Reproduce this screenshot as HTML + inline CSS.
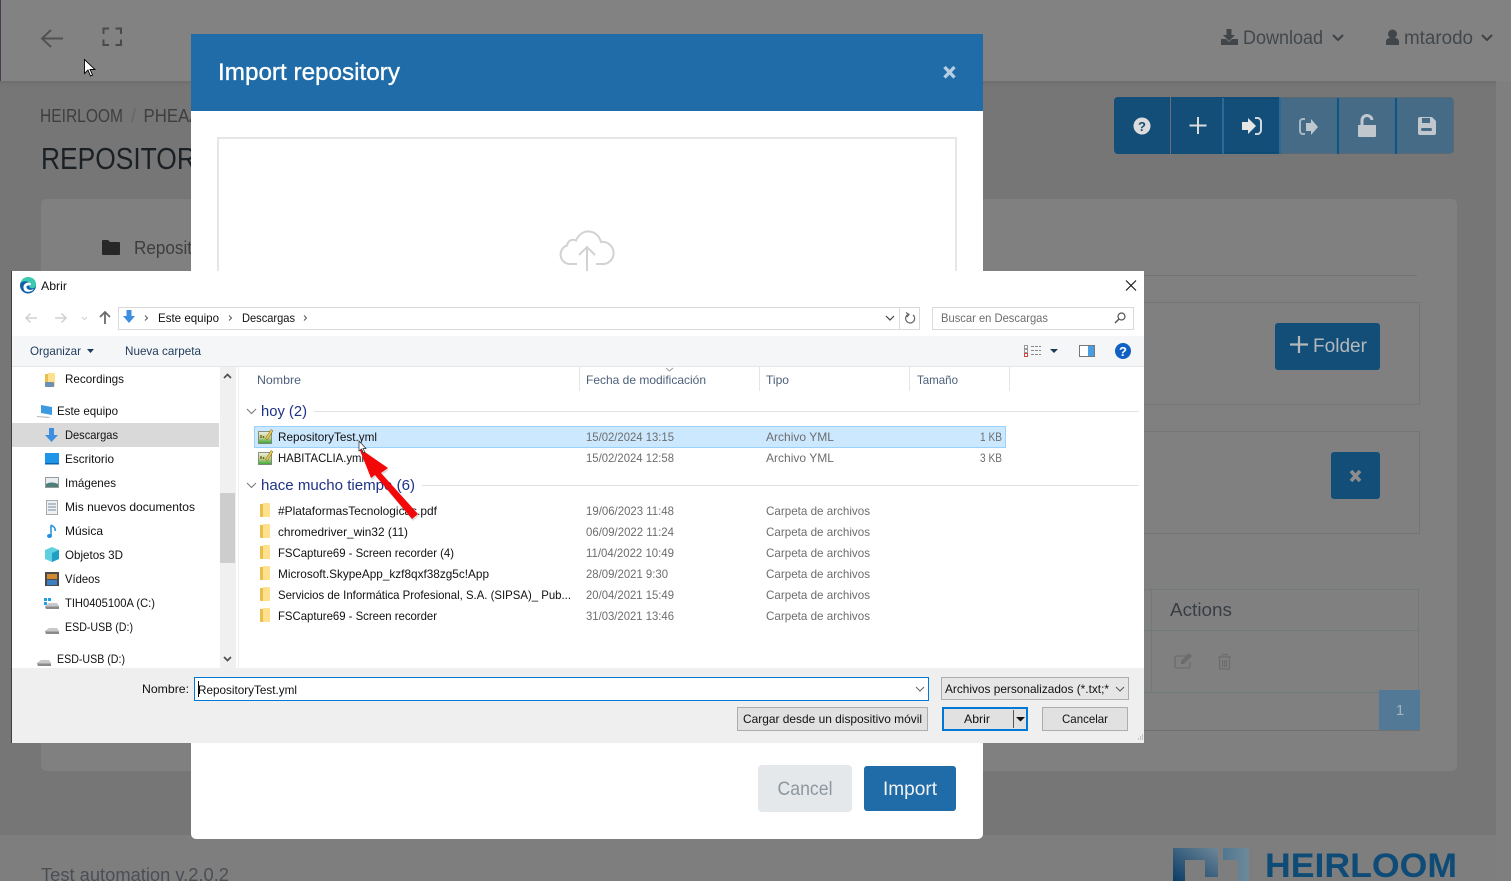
<!DOCTYPE html>
<html lang="es"><head><meta charset="utf-8"><title>Import repository</title>
<style>
html,body{margin:0;padding:0;width:1511px;height:881px;overflow:hidden;background:#767676}
svg{display:block}
text{font-family:"Liberation Sans",sans-serif;white-space:pre}
.w{font-size:12px;fill:#111}
.h{font-size:12px;fill:#4c607a}
.g{font-size:12px;fill:#6d6d6d}
.b{font-size:15px;fill:#1e3287}
</style></head><body>
<svg xmlns="http://www.w3.org/2000/svg" width="1511" height="881" viewBox="0 0 1511 881">
<defs>
<linearGradient id="sh" x1="0" y1="0" x2="0" y2="1"><stop offset="0" stop-color="#6e6e6e"/><stop offset="1" stop-color="#767676"/></linearGradient>
<linearGradient id="lg1" x1="0" y1="1" x2="1" y2="0"><stop offset="0" stop-color="#0b3c66"/><stop offset="1" stop-color="#6d8798"/></linearGradient>
<linearGradient id="lg2" x1="0" y1="0" x2="1" y2="0"><stop offset="0" stop-color="#4f7791"/><stop offset="1" stop-color="#6f8a9a"/></linearGradient>
<linearGradient id="yml" x1="0" y1="0" x2="0" y2="1"><stop offset="0" stop-color="#eef0df"/><stop offset=".55" stop-color="#b9d08c"/><stop offset="1" stop-color="#37a332"/></linearGradient>
<g id="folder"><path d="M0 1h3l1 1v12H1a1 1 0 0 1-1-1z" fill="#e8bf4d"/><path d="M3 0h6a1 1 0 0 1 1 1v13H3z" fill="#ffe08c"/></g>
<g id="ymli"><rect x="0.500" y="2.500" width="13" height="12" fill="url(#yml)" stroke="#6f7a68" stroke-width=".8"/><path d="M3 6v3M5.500 7v2" stroke="#7a6420" stroke-width="1.400"/><path d="M7.500 9.500L13 0.500l2 1.200-5.500 9z" fill="#eec94a" stroke="#6e5f24" stroke-width=".5"/></g>
<g id="drive"><path d="M1 6l4-3h8l2 3-1 3H2z" fill="#c8c8c8"/><path d="M1 6.500h14v2.500H2z" fill="#8a8a8a"/></g>
</defs>

<!-- page background -->
<rect width="1511" height="881" fill="#767676"/>
<rect x="1496" y="81" width="15" height="800" fill="#7f7f7f"/>
<rect x="0" y="0" width="1511" height="81" fill="#828282"/>
<rect x="0" y="81" width="1496" height="5" fill="url(#sh)"/>
<rect x="0" y="0" width="1" height="81" fill="#4b3b52"/>
<rect x="0" y="835" width="1496" height="46" fill="#7e7e7e"/>

<!-- top bar -->
<path d="M63 38.500H42M51 30l-9 8.500 9 8.500" fill="none" stroke="#525252" stroke-width="2"/>
<path d="M103.500 34v-5.500H109M115.500 28.500h5.500V34M121 39.500V45h-5.500M109 45h-5.500v-5.500" fill="none" stroke="#4a4a4a" stroke-width="2"/>
<path d="M1221 45v-6h5l3 3 3-3h6v6zM1226.500 29h5v6h3.500l-6 6-6-6h3.500z" fill="#41464b"/>
<text x="1243" y="44" font-size="19" fill="#42474c" textLength="80" lengthAdjust="spacingAndGlyphs">Download</text>
<path d="M1333 35l5 5 5-5" fill="none" stroke="#3e4246" stroke-width="2"/>
<circle cx="1392.500" cy="34" r="4.500" fill="#41464b"/><path d="M1386 45v-4a4 4 0 0 1 4-3h5a4 4 0 0 1 4 3v4z" fill="#41464b"/>
<text x="1404" y="44" font-size="19" fill="#42474c" textLength="69" lengthAdjust="spacingAndGlyphs">mtarodo</text>
<path d="M1482 35l5 5 5-5" fill="none" stroke="#3e4246" stroke-width="2"/>

<!-- breadcrumb -->
<text x="40" y="122" font-size="18" fill="#3e3e3e" textLength="83" lengthAdjust="spacingAndGlyphs">HEIRLOOM</text>
<text x="131" y="122" font-size="18" fill="#666">/</text>
<text x="143.500" y="122" font-size="18" fill="#3e3e3e" textLength="57" lengthAdjust="spacingAndGlyphs">PHEAA</text>
<text x="41" y="169" font-size="31" fill="#1b2025" textLength="172" lengthAdjust="spacingAndGlyphs">REPOSITORY</text>

<!-- toolbar -->
<rect x="1114.500" y="97.500" width="339" height="56" rx="4" fill="#456b86" stroke="#5a6a74"/>
<path d="M1118 97h161v57h-161a4 4 0 0 1-4-4v-49a4 4 0 0 1 4-4z" fill="#124e78"/>
<rect x="1170" y="97" width="1" height="57" fill="#6f6f78"/>
<rect x="1222" y="98" width="2" height="56" fill="#2a6a98"/>
<rect x="1224" y="98" width="55" height="1" fill="#0c4a75"/>
<rect x="1224" y="152" width="55" height="1" fill="#0c4a75"/>
<rect x="1279" y="98" width="2" height="56" fill="#2a6a98"/>
<rect x="1337" y="98" width="2" height="56" fill="#0d5587"/>
<rect x="1395" y="98" width="2" height="56" fill="#0d5587"/>
<circle cx="1142" cy="126" r="8.500" fill="#dcdcdc"/>
<text x="1142" y="131" font-size="13" font-weight="bold" text-anchor="middle" fill="#124e78">?</text>
<path d="M1198 117v17M1189.500 125.500h17" stroke="#dcdcdc" stroke-width="2"/>
<path d="M1242 122h6v-4l8 8-8 8v-4h-6z" fill="#e6e6e6"/><path d="M1255 118h3a4 4 0 0 1 3 4v8a4 4 0 0 1-3 4h-3" fill="none" stroke="#d0d8de" stroke-width="2"/>
<path d="M1305 119h-2a3 3 0 0 0-3 3v9a3 3 0 0 0 3 3h2" fill="none" stroke="#a9b8c3" stroke-width="2"/><path d="M1306 123h5v-4l7 8-7 8v-4h-5z" fill="#bcc7cf"/>
<path d="M1358 125h18v11a1 1 0 0 1-1 1h-16a1 1 0 0 1-1-1z" fill="#c0c8ce"/><path d="M1362 125v-4a5 5 0 0 1 10 -1" fill="none" stroke="#c0c8ce" stroke-width="3"/>
<path d="M1420 117h12l4 4v12a2 2 0 0 1-2 2h-14a2 2 0 0 1-2-2v-14a2 2 0 0 1 2-2z" fill="#c0c8ce"/><rect x="1422" y="118" width="8" height="5" fill="#456b86"/><rect x="1421" y="128" width="11" height="3" rx="1.500" fill="#456b86"/>

<!-- main card -->
<rect x="41" y="199" width="1416" height="572" rx="5" fill="#808080"/>
<path d="M102 241a1 1 0 0 1 1-1h5l2 2h9a1 1 0 0 1 1 1v11a1 1 0 0 1-1 1h-16a1 1 0 0 1-1-1z" fill="#272727"/>
<text x="134" y="254" font-size="18" fill="#3d3d3d" textLength="58" lengthAdjust="spacingAndGlyphs">Reposit</text>
<rect x="60" y="275" width="1357" height="1" fill="#737373"/>
<rect x="900" y="302.500" width="519.500" height="102" fill="none" stroke="#757575"/>
<rect x="900" y="431.500" width="519.500" height="102" fill="none" stroke="#757575"/>
<rect x="1275" y="323" width="105" height="47" rx="3" fill="#124e78"/>
<path d="M1299 329v17M1290 337.500h18" stroke="#b2b8bc" stroke-width="2.200" transform="translate(0,7)"/>
<text x="1313" y="352" font-size="19" fill="#b2b8bc" textLength="54" lengthAdjust="spacingAndGlyphs">Folder</text>
<rect x="1331" y="452" width="49" height="47" rx="3" fill="#124e78"/>
<path d="M1351 471l9 10M1360 471l-9 10" stroke="#8c8c8c" stroke-width="3.600"/>
<rect x="1100" y="589.500" width="318.500" height="41" fill="none" stroke="#707a7a"/>
<rect x="1100" y="630.500" width="318.500" height="62" fill="none" stroke="#707a7a"/>
<rect x="1151" y="589" width="1" height="104" fill="#707a7a"/>
<text x="1170" y="616" font-size="18" fill="#393e44" textLength="62" lengthAdjust="spacingAndGlyphs">Actions</text>
<path d="M1188 656h-11a2 2 0 0 0-2 2v8a2 2 0 0 0 2 2h11a2 2 0 0 0 2-2v-4" fill="none" stroke="#6c6c6c" stroke-width="1.300"/><path d="M1181 661l8-8 3 3-8 8h-3z" fill="#6c6c6c"/>
<path d="M1218 657h13M1222 657v-1.500a1 1 0 0 1 1-1h3a1 1 0 0 1 1 1v1.500M1219.500 657v12h10v-12M1222.500 660v7M1224.500 660v7M1226.500 660v7" fill="none" stroke="#6c6c6c" stroke-width="1.200"/>
<rect x="1100" y="730" width="320" height="1" fill="#707070"/>
<rect x="1379" y="690" width="41" height="40" fill="#527a96"/>
<text x="1400" y="715" font-size="15" fill="#a5b3bd" text-anchor="middle">1</text>

<!-- footer -->
<text x="41" y="881" font-size="18" fill="#4a4e55" textLength="188" lengthAdjust="spacingAndGlyphs">Test automation v.2.0.2</text>
<path d="M1173 848h45v29h-13v-17h-20v21h-12z" fill="url(#lg1)"/>
<path d="M1223 848h26v33h-11v-21h-15z" fill="url(#lg2)"/>
<text x="1265" y="877" font-size="34" font-weight="bold" fill="#0f4b77" textLength="192" lengthAdjust="spacingAndGlyphs">HEIRLOOM</text>

<!-- modal -->
<path d="M191 34h792v800a5 5 0 0 1-5 5H196a5 5 0 0 1-5-5z" fill="#fff"/>
<rect x="191" y="34" width="792" height="77" fill="#1f6ca8"/>
<text x="218" y="80" font-size="24" fill="#fff" stroke="#fff" stroke-width=".35" textLength="182" lengthAdjust="spacingAndGlyphs">Import repository</text>
<path d="M944.500 67l10 10.500M954.500 67l-10 10.500" stroke="#b7cde0" stroke-width="3.400"/>
<path d="M218 290V138h738v152" fill="none" stroke="#e6e6e6" stroke-width="2"/>
<path d="M577 264h-7a9.500 9.500 0 0 1-3-18.500c1-5 5-7 9-5 3-7 9-9.500 13-9 6 .5 10 4 12 10.500a11 11 0 0 1 3 22h-8" fill="none" stroke="#d2d2d2" stroke-width="2"/>
<path d="M587 272v-24M579 255l8-8 8 8" fill="none" stroke="#d2d2d2" stroke-width="2"/>
<rect x="758" y="765" width="94" height="47" rx="4" fill="#e4e8eb"/>
<text x="805" y="795" font-size="19" fill="#8f979e" text-anchor="middle" textLength="55" lengthAdjust="spacingAndGlyphs">Cancel</text>
<rect x="864" y="766" width="92" height="45" rx="3" fill="#1f6ca8"/>
<text x="910" y="795" font-size="19" fill="#f2f2f2" text-anchor="middle" textLength="54" lengthAdjust="spacingAndGlyphs">Import</text>

<!-- dialog -->
<rect x="11" y="271" width="1133" height="472" fill="#fff"/>
<rect x="11" y="271" width="1" height="472" fill="#3e3e3e"/>
<rect x="12" y="336" width="1132" height="30" fill="#f5f6f7"/>
<rect x="12" y="366" width="1132" height="1" fill="#e6e6e6"/>
<rect x="12" y="668" width="1132" height="75" fill="#efefef"/>

<!-- title -->
<circle cx="28" cy="285.500" r="8" fill="#0f62a8"/>
<path d="M20.500 283c1.500-5 5-6 7.500-6 5 0 8.500 3.500 8 8-.3 3-3.500 4-5.500 3-2-1-1-3 0-4-1-3-7-4-10-1z" fill="#3cc9b0"/>
<path d="M23.500 288c-.5-3 2-5.500 5-5.500 2 0 2.500 1 2.500 2 0 .5-1 1-3 1-1.500 0-2 1.500-1 3 1 1.500 4 2 7 .5-2 3-7 3.500-9 2-1-.6-1.300-2-1.500-3z" fill="#fff"/>
<text x="41" y="290" class="w" textLength="26" lengthAdjust="spacingAndGlyphs">Abrir</text>
<path d="M1126 280.500l10 10M1136 280.500l-10 10" stroke="#111" stroke-width="1.100"/>

<!-- nav row -->
<path d="M37 318H26M30.500 313.500L26 318l4.500 4.500" fill="none" stroke="#d0d0d0" stroke-width="1.500"/>
<path d="M55 318h11M61.500 313.500L66 318l-4.500 4.500" fill="none" stroke="#d0d0d0" stroke-width="1.500"/>
<path d="M82 317l2.500 2.500L87 317" fill="none" stroke="#d0d0d0"/>
<path d="M105 324v-12M100 317l5-5 5 5" fill="none" stroke="#6b6b6b" stroke-width="1.800"/>
<rect x="118.500" y="307.500" width="801" height="22" fill="#fff" stroke="#d9d9d9"/>
<rect x="899" y="308" width="1" height="21" fill="#d9d9d9"/>
<path d="M126.500 310h5v6h3.500l-6 7-6-7h3.500z" fill="#3d8ee0"/>
<path d="M145 315.500l2.500 2.500-2.500 2.500M229 315.500l2.500 2.500-2.500 2.500M304 315.500l2.500 2.500-2.500 2.500" fill="none" stroke="#555"/>
<text x="158" y="322" class="w" textLength="61" lengthAdjust="spacingAndGlyphs">Este equipo</text>
<text x="242" y="322" class="w" textLength="53" lengthAdjust="spacingAndGlyphs">Descargas</text>
<path d="M886 316l4 4 4-4" fill="none" stroke="#444" stroke-width="1.200"/>
<path d="M913 315a4.500 4.500 0 1 1-5-.5M906 312.500l3 2-2 2.500" fill="none" stroke="#666" stroke-width="1.200"/>
<rect x="932.500" y="307.500" width="201" height="22" fill="#fff" stroke="#d9d9d9"/>
<text x="941" y="322" class="g" textLength="107" lengthAdjust="spacingAndGlyphs">Buscar en Descargas</text>
<circle cx="1121.500" cy="316.500" r="3.500" fill="none" stroke="#555" stroke-width="1.200"/><path d="M1119 319l-4 4" stroke="#555" stroke-width="1.500"/>

<!-- toolbar -->
<text x="30" y="355" class="w" style="fill:#1e3a5a" textLength="51" lengthAdjust="spacingAndGlyphs">Organizar</text>
<path d="M87 349h7l-3.500 4z" fill="#1e3a5a"/>
<text x="125" y="355" class="w" style="fill:#1e3a5a" textLength="76" lengthAdjust="spacingAndGlyphs">Nueva carpeta</text>
<rect x="1024.500" y="345.500" width="3" height="3" fill="#fff" stroke="#999"/><rect x="1024.500" y="349.500" width="3" height="3" fill="#fff" stroke="#999"/><rect x="1024.500" y="353.500" width="3" height="3" fill="#fff" stroke="#c44"/>
<path d="M1031 346.500h10M1031 350.500h10M1031 354.500h10" stroke="#888" stroke-dasharray="3 1"/>
<path d="M1050 349h8l-4 4z" fill="#1e3a5a"/>
<rect x="1079.500" y="345.500" width="15" height="11" fill="#fff" stroke="#777"/><rect x="1088" y="346" width="6" height="10" fill="#4a9de0"/>
<circle cx="1123" cy="351" r="8" fill="#0f62c4"/><text x="1123" y="356" font-size="13" font-weight="bold" fill="#fff" text-anchor="middle">?</text>

<!-- sidebar -->
<rect x="12" y="423" width="207" height="24" fill="#d9d9d9"/>
<rect x="220" y="367" width="16" height="301" fill="#f0f0f0"/>
<rect x="220" y="493" width="15" height="70" fill="#cdcdcd"/>
<path d="M224 378l3.500-3.500 3.500 3.500M224 657l3.500 3.500 3.500-3.500" fill="none" stroke="#505050" stroke-width="1.700"/>
<rect x="238" y="367" width="1" height="301" fill="#f0f0f0"/>
<g transform="translate(45,373)"><use href="#folder"/><rect x="0" y="9" width="9" height="5" rx="1" fill="#6d8fb5"/></g>
<text x="65" y="383" class="w" textLength="59" lengthAdjust="spacingAndGlyphs">Recordings</text>
<path d="M41 405l11 2v8l-11-2z" fill="#3c9ae0"/><path d="M37 416l14 1-3 1-11-1z" fill="#b9b9b9"/>
<text x="57" y="415" class="w" textLength="61" lengthAdjust="spacingAndGlyphs">Este equipo</text>
<path d="M49 428h5v7h4l-6.500 7-6.500-7h4z" fill="#3d8ee0"/>
<text x="65" y="439" class="w" textLength="53" lengthAdjust="spacingAndGlyphs">Descargas</text>
<rect x="45" y="453" width="14" height="11" fill="#1f95e8"/><rect x="45" y="463" width="14" height="1.500" fill="#0d62a8"/>
<text x="65" y="463" class="w" textLength="49" lengthAdjust="spacingAndGlyphs">Escritorio</text>
<rect x="45.500" y="477.500" width="13" height="10" fill="#e8eef2" stroke="#999"/><path d="M46 484c3-2 8-2 12 0v3H46z" fill="#4d7f7a"/>
<text x="65" y="487" class="w" textLength="51" lengthAdjust="spacingAndGlyphs">Imágenes</text>
<rect x="46.500" y="500.500" width="11" height="14" fill="#eef1f4" stroke="#aaa"/><path d="M48 504h8M48 507h8M48 510h8" stroke="#7a8ca0"/>
<text x="65" y="511" class="w" textLength="130" lengthAdjust="spacingAndGlyphs">Mis nuevos documentos</text>
<path d="M51 525v11M51 525c2 1 5 3 4 6" fill="none" stroke="#1f8fe0" stroke-width="1.500"/><ellipse cx="49.500" cy="536" rx="2.500" ry="2" fill="#1f8fe0"/>
<text x="65" y="535" class="w" textLength="38" lengthAdjust="spacingAndGlyphs">Música</text>
<path d="M45 550l7-3 7 3v9l-7 3-7-3z" fill="#5ed0e0"/><path d="M52 553v9l7-3v-9z" fill="#1f9fc4"/>
<text x="65" y="559" class="w" textLength="58" lengthAdjust="spacingAndGlyphs">Objetos 3D</text>
<rect x="45" y="572" width="14" height="14" fill="#4a4a4a"/><rect x="47" y="574" width="10" height="5" fill="#d08a30"/><rect x="47" y="580" width="10" height="5" fill="#3d7fc4"/>
<text x="65" y="583" class="w" textLength="35" lengthAdjust="spacingAndGlyphs">Vídeos</text>
<rect x="44" y="598" width="3" height="3" fill="#20a0e8"/><rect x="48" y="598" width="3" height="3" fill="#20a0e8"/><rect x="44" y="602" width="3" height="3" fill="#20a0e8"/>
<use href="#drive" x="44" y="600"/>
<text x="65" y="607" class="w" textLength="90" lengthAdjust="spacingAndGlyphs">TIH0405100A (C:)</text>
<use href="#drive" x="44" y="625"/>
<text x="65" y="631" class="w" textLength="68" lengthAdjust="spacingAndGlyphs">ESD-USB (D:)</text>
<use href="#drive" x="36" y="657"/>
<text x="57" y="663" class="w" textLength="68" lengthAdjust="spacingAndGlyphs">ESD-USB (D:)</text>

<!-- headers -->
<text x="257" y="384" class="h" textLength="44" lengthAdjust="spacingAndGlyphs">Nombre</text>
<text x="586" y="384" class="h" textLength="120" lengthAdjust="spacingAndGlyphs">Fecha de modificación</text>
<text x="766" y="384" class="h" textLength="23" lengthAdjust="spacingAndGlyphs">Tipo</text>
<text x="917" y="384" class="h" textLength="41" lengthAdjust="spacingAndGlyphs">Tamaño</text>
<path d="M579.500 367v24M759.500 367v24M909.500 367v24M1009.500 367v24" stroke="#e5e5e5"/>
<path d="M666 368l3.500 3 3.500-3" fill="none" stroke="#999" stroke-width=".9"/>

<!-- groups -->
<path d="M247 409l4.500 4.500 4.500-4.500" fill="none" stroke="#777"/>
<text x="261" y="416" class="b" textLength="46" lengthAdjust="spacingAndGlyphs">hoy (2)</text>
<rect x="314" y="411" width="825" height="1" fill="#e2e2e2"/>
<rect x="254.500" y="426.500" width="751" height="21" fill="#cce8ff" stroke="#99d1ff"/>
<use href="#ymli" x="258" y="429"/>
<text x="278" y="441" class="w" textLength="99" lengthAdjust="spacingAndGlyphs">RepositoryTest.yml</text>
<text x="586" y="441" class="g" textLength="88" lengthAdjust="spacingAndGlyphs">15/02/2024 13:15</text>
<text x="766" y="441" class="g" textLength="68" lengthAdjust="spacingAndGlyphs">Archivo YML</text>
<text x="980" y="441" class="g" textLength="22" lengthAdjust="spacingAndGlyphs">1 KB</text>
<use href="#ymli" x="258" y="450"/>
<text x="278" y="462" class="w" textLength="86" lengthAdjust="spacingAndGlyphs">HABITACLIA.yml</text>
<text x="586" y="462" class="g" textLength="88" lengthAdjust="spacingAndGlyphs">15/02/2024 12:58</text>
<text x="766" y="462" class="g" textLength="68" lengthAdjust="spacingAndGlyphs">Archivo YML</text>
<text x="980" y="462" class="g" textLength="22" lengthAdjust="spacingAndGlyphs">3 KB</text>
<path d="M247 483l4.500 4.500 4.500-4.500" fill="none" stroke="#777"/>
<text x="261" y="490" class="b" textLength="154" lengthAdjust="spacingAndGlyphs">hace mucho tiempo (6)</text>
<rect x="422" y="485" width="717" height="1" fill="#e2e2e2"/>

<use href="#folder" x="260" y="503"/>
<text x="278" y="515" class="w" textLength="159" lengthAdjust="spacingAndGlyphs">#PlataformasTecnologicas.pdf</text>
<text x="586" y="515" class="g" textLength="88" lengthAdjust="spacingAndGlyphs">19/06/2023 11:48</text>
<text x="766" y="515" class="g" textLength="104" lengthAdjust="spacingAndGlyphs">Carpeta de archivos</text>
<use href="#folder" x="260" y="524"/>
<text x="278" y="536" class="w" textLength="130" lengthAdjust="spacingAndGlyphs">chromedriver_win32 (11)</text>
<text x="586" y="536" class="g" textLength="88" lengthAdjust="spacingAndGlyphs">06/09/2022 11:24</text>
<text x="766" y="536" class="g" textLength="104" lengthAdjust="spacingAndGlyphs">Carpeta de archivos</text>
<use href="#folder" x="260" y="545"/>
<text x="278" y="557" class="w" textLength="176" lengthAdjust="spacingAndGlyphs">FSCapture69 - Screen recorder (4)</text>
<text x="586" y="557" class="g" textLength="88" lengthAdjust="spacingAndGlyphs">11/04/2022 10:49</text>
<text x="766" y="557" class="g" textLength="104" lengthAdjust="spacingAndGlyphs">Carpeta de archivos</text>
<use href="#folder" x="260" y="566"/>
<text x="278" y="578" class="w" textLength="211" lengthAdjust="spacingAndGlyphs">Microsoft.SkypeApp_kzf8qxf38zg5c!App</text>
<text x="586" y="578" class="g" textLength="82" lengthAdjust="spacingAndGlyphs">28/09/2021 9:30</text>
<text x="766" y="578" class="g" textLength="104" lengthAdjust="spacingAndGlyphs">Carpeta de archivos</text>
<use href="#folder" x="260" y="587"/>
<text x="278" y="599" class="w" textLength="293" lengthAdjust="spacingAndGlyphs">Servicios de Informática Profesional, S.A. (SIPSA)_ Pub...</text>
<text x="586" y="599" class="g" textLength="88" lengthAdjust="spacingAndGlyphs">20/04/2021 15:49</text>
<text x="766" y="599" class="g" textLength="104" lengthAdjust="spacingAndGlyphs">Carpeta de archivos</text>
<use href="#folder" x="260" y="608"/>
<text x="278" y="620" class="w" textLength="159" lengthAdjust="spacingAndGlyphs">FSCapture69 - Screen recorder</text>
<text x="586" y="620" class="g" textLength="88" lengthAdjust="spacingAndGlyphs">31/03/2021 13:46</text>
<text x="766" y="620" class="g" textLength="104" lengthAdjust="spacingAndGlyphs">Carpeta de archivos</text>

<!-- bottom -->
<text x="142" y="693" class="w" textLength="47" lengthAdjust="spacingAndGlyphs">Nombre:</text>
<rect x="194.500" y="677.500" width="734" height="23" fill="#fff" stroke="#0078d7"/>
<rect x="198" y="681" width="1" height="16" fill="#111"/>
<text x="198" y="694" class="w" textLength="99" lengthAdjust="spacingAndGlyphs">RepositoryTest.yml</text>
<path d="M916 687l4 4 4-4" fill="none" stroke="#666"/>
<rect x="941.500" y="677.500" width="187" height="22" fill="#e6e6e6" stroke="#adadad"/>
<text x="945" y="693" class="w" textLength="164" lengthAdjust="spacingAndGlyphs">Archivos personalizados (*.txt;*</text>
<path d="M1116 687l4 4 4-4" fill="none" stroke="#555"/>
<rect x="737.500" y="707.500" width="190" height="23" fill="#e1e1e1" stroke="#adadad"/>
<text x="743" y="723" class="w" textLength="179" lengthAdjust="spacingAndGlyphs">Cargar desde un dispositivo móvil</text>
<rect x="943" y="708" width="84" height="22" fill="#e1e1e1" stroke="#0078d7" stroke-width="2"/>
<text x="964" y="723" class="w" textLength="26" lengthAdjust="spacingAndGlyphs">Abrir</text>
<rect x="1013" y="710" width="1" height="18" fill="#555"/>
<path d="M1016 717h9l-4.500 4.500z" fill="#111"/>
<rect x="1042.500" y="707.500" width="85" height="23" fill="#e1e1e1" stroke="#adadad"/>
<text x="1062" y="723" class="w" textLength="46" lengthAdjust="spacingAndGlyphs">Cancelar</text>
<path d="M1142 735h1M1140 737h1M1142 737h1M1138 739h1M1140 739h1M1142 739h1" stroke="#b5b5b5" stroke-width="1.500"/>

<!-- annotation arrow -->
<path d="M359 448l12 30 4-3 37 44 6-5-37-41 7-5z" fill="#000" opacity=".13" transform="translate(1,2)"/>
<path d="M359 448l12 30 4-3 37 44 6-5-37-41 7-5z" fill="#f20808"/>
<path d="M359 441v10l2.500-2 2 4 1.500-.7-2-3.800h3z" fill="#fff" stroke="#222" stroke-width=".7"/>

<!-- mouse cursor -->
<path d="M84.500 59.500v14l3.500-3.500 2.500 6 2-1-2.500-5.500h5z" fill="#fff" stroke="#000" stroke-width=".9"/>
</svg>
</body></html>
